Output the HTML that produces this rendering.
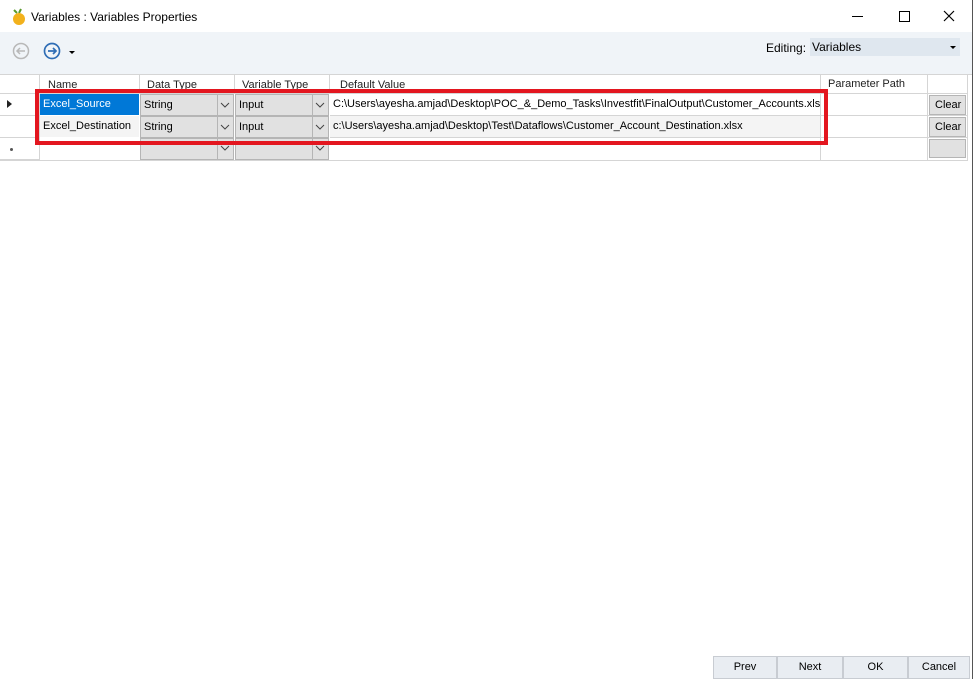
<!DOCTYPE html><html><head><style>
body{margin:0;width:975px;height:679px;position:relative;overflow:hidden;background:#fff;font-family:"Liberation Sans",sans-serif;font-size:11px;color:#000}
.a{position:absolute}
.c{position:absolute;box-sizing:border-box;white-space:nowrap;overflow:hidden;line-height:21px;padding-left:3px}
.h{border-right:1px solid #d5d5d5;border-bottom:1px solid #d5d5d5;color:#222}
.cb{background:#e1e1e1;border:1px solid #b5b5b5}
.btn{position:absolute;top:656px;height:23px;background:#e9edf2;border:1px solid #c8ccd2;box-sizing:border-box;text-align:center;line-height:21px}
</style></head><body>
<div class="a" style="left:0;top:0;width:975px;height:32px;background:#fff"></div>
<svg class="a" style="left:11px;top:8px" width="16" height="18"><path d="M3 2 L6 5 M10 1 L8 5" stroke="#5a9a2a" stroke-width="2"/><circle cx="8" cy="11" r="6" fill="#f2b11c"/></svg>
<div class="a" style="left:31px;top:10px;font-size:12px">Variables : Variables Properties</div>
<div class="a" style="left:852px;top:16px;width:11px;height:1px;background:#000"></div>
<div class="a" style="left:899px;top:11px;width:9px;height:9px;border:1px solid #000"></div>
<svg class="a" style="left:943px;top:10px" width="12" height="12"><path d="M1 1L11 11M11 1L1 11" stroke="#000" stroke-width="1.2"/></svg>
<div class="a" style="left:0;top:32px;width:972px;height:42px;background:#f0f4f8"></div>
<svg class="a" style="left:12px;top:42px" width="18" height="18"><circle cx="9" cy="9" r="7.5" fill="none" stroke="#b8b8b8" stroke-width="1.5"/><path d="M13 9H5M8 6L5 9L8 12" fill="none" stroke="#b8b8b8" stroke-width="1.5"/></svg>
<svg class="a" style="left:43px;top:42px" width="18" height="18"><circle cx="9" cy="9" r="7.5" fill="none" stroke="#2f6db5" stroke-width="1.7"/><path d="M5 9H13M10 6L13 9L10 12" fill="none" stroke="#2f6db5" stroke-width="1.7"/></svg>
<div class="a" style="left:69px;top:51px;border-left:3px solid transparent;border-right:3px solid transparent;border-top:3px solid #000"></div>
<div class="a" style="left:766px;top:41px;font-size:12px">Editing:</div>
<div class="a" style="left:810px;top:38px;width:148px;height:18px;background:#dfe7ef;line-height:18px;padding-left:2px;font-size:12px">Variables</div>
<div class="a" style="left:950px;top:46px;border-left:3px solid transparent;border-right:3px solid transparent;border-top:3px solid #000"></div>
<div class="a" style="left:972px;top:0;width:1px;height:679px;background:#555"></div>
<div class="a" style="left:0;top:74px;width:972px;height:1px;background:#d5d5d5"></div>
<div class="a" style="left:0;top:160px;width:968px;height:1px;background:#d5d5d5"></div>
<div class="c h" style="left:0;top:75px;width:40px;height:19px"></div>
<div class="c h" style="left:40px;top:75px;width:100px;height:19px;padding-left:8px;line-height:20px">Name</div>
<div class="c h" style="left:140px;top:75px;width:95px;height:19px;padding-left:7px;line-height:20px">Data Type</div>
<div class="c h" style="left:235px;top:75px;width:95px;height:19px;padding-left:7px;line-height:20px">Variable Type</div>
<div class="c h" style="left:330px;top:75px;width:491px;height:19px;padding-left:10px;line-height:20px">Default Value</div>
<div class="c h" style="left:821px;top:75px;width:107px;height:19px;padding-left:7px;line-height:18px">Parameter Path</div>
<div class="c h" style="left:928px;top:75px;width:40px;height:19px"></div>
<div class="a" style="left:7px;top:100px;border-top:4px solid transparent;border-bottom:4px solid transparent;border-left:5px solid #222"></div>
<div class="c" style="left:40px;top:94px;width:99px;height:21px;background:#0078d7;color:#fff">Excel_Source</div>
<div class="c" style="left:40px;top:116px;width:99px;height:21px;background:#f4f4f4">Excel_Destination</div>
<div class="c h" style="left:0;top:94px;width:40px;height:22px"></div>
<div class="c h" style="left:0;top:116px;width:40px;height:22px"></div>
<div class="c h" style="left:0;top:138px;width:40px;height:22px"></div>
<div class="a" style="left:10px;top:148px;width:3px;height:3px;background:#555;border-radius:2px"></div>
<div class="c cb" style="left:140px;top:94px;width:94px;height:22px;line-height:20px">String</div>
<div class="c cb" style="left:235px;top:94px;width:94px;height:22px;line-height:20px">Input</div>
<div class="c cb" style="left:140px;top:116px;width:94px;height:22px;line-height:20px">String</div>
<div class="c cb" style="left:235px;top:116px;width:94px;height:22px;line-height:20px">Input</div>
<div class="c cb" style="left:140px;top:138px;width:94px;height:22px"></div>
<div class="c cb" style="left:235px;top:138px;width:94px;height:22px"></div>
<svg class="a" style="left:0;top:0" width="975" height="170"><g fill="none" stroke="#444"><path d="M221 103l4 4 4-4M316 103l4 4 4-4M221 125l4 4 4-4M316 125l4 4 4-4M221 146l4 4 4-4M316 146l4 4 4-4"/></g><g stroke="#b5b5b5"><path d="M217.5 95v20M312.5 95v20M217.5 117v20M312.5 117v20M217.5 139v20M312.5 139v20"/></g></svg>
<div class="c" style="left:330px;top:94px;width:491px;height:22px;border-right:1px solid #d5d5d5;border-bottom:1px solid #d5d5d5">C:\Users\ayesha.amjad\Desktop\POC_&amp;_Demo_Tasks\Investfit\FinalOutput\Customer_Accounts.xls</div>
<div class="c" style="left:330px;top:116px;width:491px;height:22px;border-right:1px solid #d5d5d5;border-bottom:1px solid #d5d5d5;background:#f4f4f4">c:\Users\ayesha.amjad\Desktop\Test\Dataflows\Customer_Account_Destination.xlsx</div>
<div class="c" style="left:330px;top:138px;width:491px;height:22px;border-right:1px solid #d5d5d5"></div>
<div class="c" style="left:821px;top:94px;width:107px;height:66px;border-right:1px solid #d5d5d5"></div>
<div class="a" style="left:821px;top:115px;width:147px;height:1px;background:#d5d5d5"></div>
<div class="a" style="left:821px;top:137px;width:147px;height:1px;background:#d5d5d5"></div>
<div class="c cb" style="left:929px;top:95px;width:37px;height:20px;line-height:18px;padding-left:5px">Clear</div>
<div class="c cb" style="left:929px;top:117px;width:37px;height:20px;line-height:18px;padding-left:5px">Clear</div>
<div class="c cb" style="left:929px;top:139px;width:37px;height:19px"></div>
<div class="a" style="left:967px;top:75px;width:1px;height:86px;background:#d5d5d5"></div>
<div class="a" style="left:35px;top:89px;width:793px;height:56px;box-sizing:border-box;border:4px solid #e3161f"></div>
<div class="btn" style="left:713px;width:64px">Prev</div>
<div class="btn" style="left:777px;width:66px">Next</div>
<div class="btn" style="left:843px;width:65px">OK</div>
<div class="btn" style="left:908px;width:62px">Cancel</div>
</body></html>
